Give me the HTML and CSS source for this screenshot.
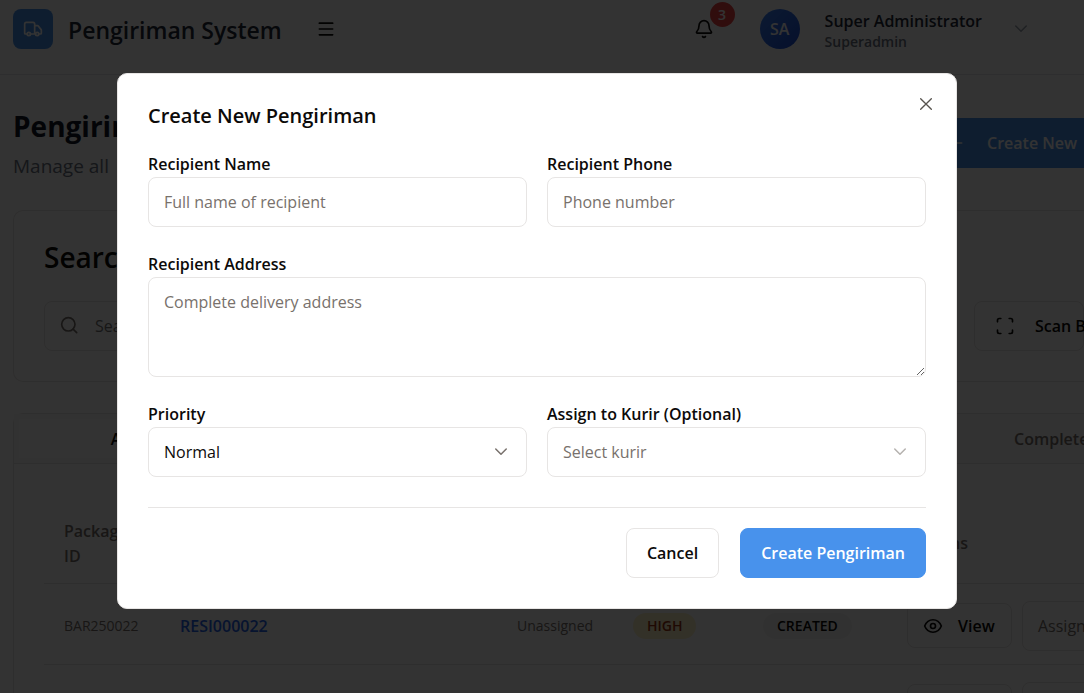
FILE: index.html
```html
<!DOCTYPE html>
<html lang="id">
<head>
<meta charset="utf-8">
<meta name="viewport" content="width=device-width, initial-scale=1">
<title>Pengiriman System</title>
<link rel="stylesheet" href="styles.css">
</head>
<body>
<div class="page">
  <header class="topbar">
    <span class="logo"><svg class="icon" viewBox="0 0 24 24"><path d="M14 18V6a2 2 0 0 0-2-2H4a2 2 0 0 0-2 2v11a1 1 0 0 0 1 1h2M15 18H9M19 18h2a1 1 0 0 0 1-1v-3.65a1 1 0 0 0-.22-.624l-3.48-4.35A1 1 0 0 0 17.52 8H14"/><circle cx="17" cy="18" r="2"/><circle cx="7" cy="18" r="2"/></svg></span>
    <span class="brand">Pengiriman System</span>
    <button class="bare menu" aria-label="Menu"><svg class="icon" viewBox="0 0 24 24"><path d="M4 5h16M4 12h16M4 19h16"/></svg></button>
    <button class="bare bell" aria-label="Notifications"><svg class="icon" viewBox="0 0 24 24"><path d="M10.27 21a2 2 0 0 0 3.46 0M3.26 15.33A1 1 0 0 0 4 17h16a1 1 0 0 0 .74-1.67C19.41 13.96 18 12.5 18 8A6 6 0 0 0 6 8c0 4.5-1.41 5.96-2.74 7.33"/></svg><span class="badge">3</span></button>
    <span class="avatar">SA</span>
    <div class="who"><strong>Super Administrator</strong><span>Superadmin</span></div>
    <svg class="icon chevron" viewBox="0 0 24 24"><path d="m5 8 7 7 7-7"/></svg>
  </header>
  <main class="content">
    <div class="heading">
      <div><h1>Pengiriman</h1><p>Manage all</p></div>
      <button class="create"><svg class="icon" viewBox="0 0 24 24"><path d="M4 12h16M12 4v16"/></svg>Create New</button>
    </div>
    <section class="card search">
      <h2>Search</h2>
      <div class="searchrow">
        <label class="searchbox"><svg class="icon" viewBox="0 0 24 24"><circle cx="10" cy="10" r="8"/><path d="m20 20-4.300-4.300"/></svg><input type="text" placeholder="Search" aria-label="Search"></label>
        <button class="outline scan"><svg class="icon" viewBox="0 0 24 24"><path d="M3 7V5a2 2 0 0 1 2-2h2M17 3h2a2 2 0 0 1 2 2v2M21 17v2a2 2 0 0 1-2 2h-2M7 21H5a2 2 0 0 1-2-2v-2"/></svg>Scan Barcode</button>
      </div>
    </section>
    <section class="card list">
      <div class="tabs"><button class="tab active">All</button><button class="tab last">Completed</button></div>
      <table class="table">
        <colgroup><col class="c1"><col class="c2"><col class="c3"><col class="c4"><col class="c5"><col class="c6"></colgroup>
        <thead><tr><th>Package ID</th><th></th><th></th><th></th><th></th><th>Actions</th></tr></thead>
        <tbody>
          <tr><td class="code">BAR250022</td><td><a href="#">RESI000022</a></td><td class="none">Unassigned</td><td><span class="pill high">HIGH</span></td><td><span class="pill made">CREATED</span></td>
          <td><div class="actions"><button class="outline view"><svg class="icon" viewBox="0 0 24 24"><path d="M2 12c2-5 6-7.500 10-7.500s8 2.500 10 7.500c-2 5-6 7.500-10 7.500S4 17 2 12z"/><circle cx="12" cy="12" r="3"/></svg>View</button><button class="outline assign">Assign</button></div></td></tr>
          <tr><td></td><td></td><td></td><td></td><td></td><td><div class="actions"><button class="outline view" aria-label="View"></button><button class="outline assign" aria-label="Assign"></button></div></td></tr>
        </tbody>
      </table>
    </section>
  </main>
</div>
<div class="overlay">
  <form class="dialog" role="dialog" aria-labelledby="title">
    <div class="dialoghead"><h2 id="title">Create New Pengiriman</h2>
    <button type="button" class="bare close" aria-label="Close"><svg class="icon" viewBox="0 0 24 24"><path d="M4 4l16 16M20 4 4 20"/></svg></button></div>
    <div class="fields">
      <div class="field"><label for="name">Recipient Name</label><input id="name" class="control" type="text" placeholder="Full name of recipient"></div>
      <div class="field"><label for="phone">Recipient Phone</label><input id="phone" class="control" type="tel" placeholder="Phone number"></div>
      <div class="field wide"><label for="address">Recipient Address</label><textarea id="address" class="control" placeholder="Complete delivery address"></textarea></div>
      <div class="field"><label for="priority">Priority</label><div class="selectwrap"><select id="priority" class="control"><option>Normal</option></select><svg class="icon arrow" viewBox="0 0 24 24"><path d="m5 8 7 7 7-7"/></svg></div></div>
      <div class="field"><label for="kurir">Assign to Kurir (Optional)</label><div class="selectwrap"><select id="kurir" class="control empty"><option>Select kurir</option></select><svg class="icon arrow pale" viewBox="0 0 24 24"><path d="m5 8 7 7 7-7"/></svg></div></div>
    </div>
    <div class="buttons"><button type="button" class="cancel">Cancel</button><button type="submit" class="submit">Create Pengiriman</button></div>
  </form>
</div>
</body>
</html>
```
FILE: styles.css
```css
* { box-sizing: border-box; }
html, body { height: 100%; }
body { margin: 0; overflow: hidden; background: #fff; color: #0c0a09; font: 16px/24px "Open Sans", "Noto Sans", sans-serif; }
button, input, select, textarea { font: inherit; color: inherit; }
button { white-space: nowrap; }
h1, h2, p { margin: 0; }
.icon { width: 20px; height: 20px; flex: none; fill: none; stroke: currentColor; stroke-width: 2; stroke-linecap: round; stroke-linejoin: round; }
.bare { padding: 0; border: 0; background: none; display: flex; }

.page { height: 100vh; overflow: hidden; }
.topbar { display: flex; align-items: center; height: 75px; padding: 0 54px 16px 13px; border-bottom: 1px solid #e5e7eb; }
.logo { display: grid; place-items: center; width: 40px; height: 40px; border-radius: 8px; background: #4892ec; color: #fff; }
.brand { margin: 2px 0 0 15px; font-size: 23px; line-height: 32px; font-weight: 600; color: #1f2937; }
.menu { margin-left: 34px; }
.bell { position: relative; margin-left: auto; }
.badge { position: absolute; left: 16px; top: -17px; width: 25px; height: 25px; border-radius: 50%; background: #ef4444; color: #fff; font-size: 14px; line-height: 25px; font-weight: 600; }
.avatar { display: grid; place-items: center; width: 40px; height: 40px; margin-left: 46px; border-radius: 50%; background: linear-gradient(135deg, #3b82f6, #1d4ed8); color: #fff; font-weight: 600; }
.who { display: flex; flex-direction: column; margin: 3px 30px 0 25px; }
.who strong { font-weight: 600; color: #1f2937; line-height: 22px; }
.who span { font-size: 14px; line-height: 20px; font-weight: 600; color: #6b7280; }
.chevron { width: 18px; height: 18px; color: #9ca3af; }

.content { padding: 31px 0 0 13px; }
.heading { display: flex; justify-content: space-between; align-items: flex-start; margin-bottom: 24px; }
.heading h1 { font-size: 28px; line-height: 40px; font-weight: 700; color: #111827; }
.heading p { font-size: 19px; line-height: 40px; color: #6b7280; }
.create { display: flex; align-items: center; gap: 22px; width: 160px; height: 50px; margin-top: 12px; padding: 0 0 0 21px; border: 0; background: #4892ec; color: #fff; font-weight: 600; }
.card { border: 1px solid #e7e5e4; border-right: 0; border-radius: 10px 0 0 10px; }
.search { padding: 29px 0 30px 30px; margin-bottom: 31px; }
.search h2 { font-size: 28px; line-height: 34px; font-weight: 600; margin-bottom: 27px; }
.searchrow { display: flex; gap: 20px; }
.searchbox { display: flex; align-items: center; gap: 15px; flex: 1; height: 50px; padding: 0 15px; border: 1px solid #e7e5e4; border-radius: 8px; color: #78716c; }
.searchbox input { flex: 1; min-width: 0; padding: 0; border: 0; background: none; }
.outline { display: flex; align-items: center; gap: 15px; border: 1px solid #e7e5e4; border-radius: 8px; background: #fff; font-weight: 600; }
.scan { width: 110px; height: 50px; padding: 0 20px; gap: 20px; }
.tabs { display: flex; justify-content: space-between; height: 50px; padding: 5px 0 5px 5px; background: #f9f9f8; border-bottom: 1px solid #e7e5e4; }
.tab { border: 0; background: none; font-weight: 600; color: #78716c; }
.tab.active { width: 203px; background: #fff; color: #0c0a09; }
.tab.last { width: 90px; padding: 0 0 0 20px; text-align: left; }
.table { width: calc(100% - 30px); margin: 41px 0 0 30px; border-collapse: collapse; table-layout: fixed; }
.c1 { width: 116px; }
.c2 { width: 337px; }
.c3 { width: 116px; }
.c4 { width: 130px; }
.c5 { width: 144px; }
.table th { height: 78px; padding: 0 20px; text-align: left; font-weight: 600; color: #78716c; line-height: 25px; }
.table td { height: 81px; padding: 4px 20px 0; }
.table th:last-child { padding-left: 24px; }
.table tr { border-bottom: 1px solid #e7e5e4; }
.table .code, .table .none { font-size: 14px; color: #78716c; }
.table a { color: #2563eb; font-weight: 600; text-decoration: none; }
.pill { display: inline-block; padding: 0 14px; border-radius: 13px; font-size: 14px; line-height: 26px; font-weight: 600; }
.high { background: #fef3c7; color: #9a3412; }
.made { background: #f5f5f4; }
.actions { display: flex; align-items: center; gap: 10px; }
.view { width: 105px; height: 45px; padding: 0 15px; flex: none; }
.assign { width: 110px; height: 50px; padding: 0 15px; flex: none; font-weight: 400; color: #78716c; }

.overlay { position: fixed; inset: 0; display: grid; place-items: center; padding: 0 10px 11px 0; background: rgba(0, 0, 0, .8); }
.dialog { width: calc(100% - 234px); max-width: 840px; padding: 30px; border: 1px solid #e7e5e4; border-radius: 10px; background: #fff; }
.dialoghead { display: flex; justify-content: space-between; align-items: flex-start; margin-bottom: 23px; }
.dialoghead h2 { margin-top: -1px; font-size: 20px; line-height: 26px; font-weight: 600; }
.close { margin: -8px -8px 0 0; color: #57534e; }
.close .icon { width: 16px; height: 16px; }
.fields { display: grid; grid-template-columns: 1fr 1fr; gap: 25px 20px; padding-bottom: 30px; border-bottom: 1px solid #e7e5e4; }
.field { display: flex; flex-direction: column; }
.field label { font-weight: 600; line-height: 25px; }
.wide { grid-column: 1 / -1; }
.control { display: block; width: 100%; height: 50px; padding: 0 15px; border: 1px solid #e7e5e4; border-radius: 8px; background: #fff; }
.control::placeholder, .empty { color: #78716c; opacity: 1; }
textarea.control { height: 100px; padding: 12px 15px; resize: vertical; }
.selectwrap { display: grid; align-items: center; }
.selectwrap > * { grid-area: 1 / 1; }
select.control { appearance: none; }
.arrow { width: 18px; height: 18px; justify-self: end; margin-right: 17px; pointer-events: none; color: #78716c; }
.pale { color: #b5b2af; }
.buttons { display: flex; justify-content: flex-end; gap: 21px; padding-top: 20px; }
.cancel, .submit { height: 50px; padding: 0 20px; border: 1px solid #e7e5e4; border-radius: 8px; background: #fff; font-weight: 600; }
.submit { border-color: #4892ec; background: #4892ec; color: #fff; }
```
